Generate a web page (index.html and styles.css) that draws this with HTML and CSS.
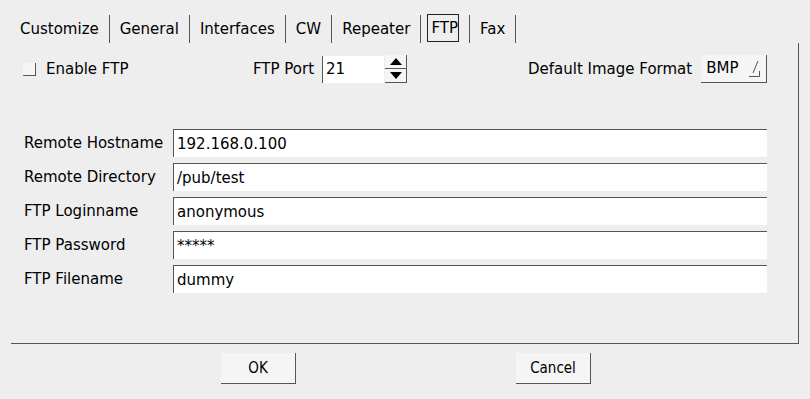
FILE: index.html
```html
<!DOCTYPE html>
<html lang="en">
<head>
  <meta charset="UTF-8">
  <title>Settings - FTP</title>
  <link rel="stylesheet" href="styles.css">
</head>
<body>
  <div class="tabs">
    <div class="tab">Customize</div>
    <div class="tab">General</div>
    <div class="tab">Interfaces</div>
    <div class="tab">CW</div>
    <div class="tab">Repeater</div>
    <div class="tab active"><span>FTP</span></div>
    <div class="tab">Fax</div>
  </div>

  <div class="panel">
    <div class="top-row">
      <label class="check"><span class="checkbox"></span>Enable FTP</label>
      <div class="port">
        <span>FTP Port</span>
        <span class="spin-field">21</span>
        <span class="spin-btns">
          <span class="spin-btn"><svg width="12" height="7" viewBox="0 0 12 7"><polygon points="6,0 12,7 0,7" fill="#000"/></svg></span>
          <span class="spin-btn"><svg width="12" height="7" viewBox="0 0 12 7"><polygon points="0,0 12,0 6,7" fill="#000"/></svg></span>
        </span>
      </div>
      <div class="format">
        <span>Default Image Format</span>
        <span class="choice">BMP
          <svg class="choice-arrow" width="14" height="18" viewBox="0 0 14 18">
            <line x1="1" y1="1.5" x2="11" y2="1.5" stroke="#fff" stroke-width="1"/>
            <line x1="5" y1="13" x2="10" y2="1" stroke="#555" stroke-width="1"/>
            <polyline points="1,16.5 11.5,16.5 11.5,11" fill="none" stroke="#555" stroke-width="1"/>
          </svg>
        </span>
      </div>
    </div>

    <div class="fields">
      <label>Remote Hostname</label><div class="field">192.168.0.100</div>
      <label>Remote Directory</label><div class="field">/pub/test</div>
      <label>FTP Loginname</label><div class="field">anonymous</div>
      <label>FTP Password</label><div class="field">*****</div>
      <label>FTP Filename</label><div class="field">dummy</div>
    </div>
  </div>

  <div class="buttons">
    <button>OK</button>
    <button>Cancel</button>
  </div>
</body>
</html>
```

FILE: styles.css
```css
body { margin: 0; background: #eeeeee; font-family: "DejaVu Sans", sans-serif; font-size: 15px; color: #000; width: 810px; height: 399px; overflow: hidden; }

.tabs { display: flex; margin: 15px 0 0 10px; height: 28px; }
.tab { padding: 0 10px; border-right: 1px solid #555; line-height: 28px; height: 28px; }
.tab.active { padding: 0 10px 0 6px; }
.tab.active span { display: inline-block; border: 1px solid #222; padding: 0 0 0 3px; line-height: 26px; position: relative; top: -1px; }

.panel { margin-left: 11px; width: 787px; height: 300px; border-right: 1px solid #555; border-bottom: 1px solid #555; }

.top-row { display: grid; grid-template-columns: 230px 275px auto; padding: 12px 0 0 12px; height: 28px; align-items: center; }
.check { display: flex; align-items: center; gap: 10px; }
.checkbox { width: 12px; height: 12px; background: #f5f5f5; border-right: 1px solid #555; border-bottom: 1px solid #555; }
.port, .format { display: flex; align-items: center; height: 28px; }
.spin-field { margin-left: 8px; width: 58px; height: 27px; line-height: 27px; background: #fff; border-left: 1px solid #555; padding-left: 3px; }
.spin-btns { display: flex; flex-direction: column; width: 22px; height: 28px; margin-left: 1px; }
.spin-btn { flex: 1; display: flex; align-items: center; justify-content: center; background: #f5f5f5; border-right: 1px solid #555; border-bottom: 1px solid #555; }
.format .choice { position: relative; margin-left: 9px; width: 60px; height: 27px; line-height: 27px; padding-left: 5px; background: #f5f5f5; border-right: 1px solid #555; border-bottom: 1px solid #555; }
.choice-arrow { position: absolute; right: 4px; top: 5px; }

.fields { display: grid; grid-template-columns: 149px 594px; grid-auto-rows: 28px; row-gap: 6px; margin: 46px 0 0 13px; align-items: center; }
.field { height: 27px; line-height: 28px; background: #fff; border-top: 1px solid #555; border-left: 1px solid #555; padding-left: 3px; box-sizing: content-box; width: 590px; }

.buttons { display: flex; gap: 220px; padding-left: 221px; margin-top: 9px; }
button { width: 75px; height: 31px; padding: 0; background: #f5f5f5; border: none; border-right: 1px solid #555; border-bottom: 1px solid #555; border-radius: 0; font-family: "DejaVu Sans Condensed", "DejaVu Sans", sans-serif; font-stretch: condensed; font-size: 15px; color: #000; }
```
